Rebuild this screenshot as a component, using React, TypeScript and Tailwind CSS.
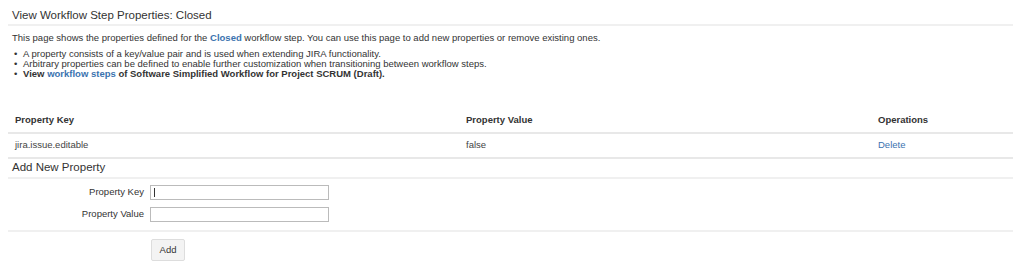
import React from "react";

export default function App() {
  const font = { fontFamily: '"Liberation Sans", Arial, sans-serif' };
  const bullets: React.ReactNode[] = [
    <>A property consists of a key/value pair and is used when extending JIRA functionality.</>,
    <>Arbitrary properties can be defined to enable further customization when transitioning between workflow steps.</>,
    <span className="font-bold">
      View <span className="text-[#3b73af]">workflow steps</span> of Software Simplified Workflow for Project SCRUM (Draft).
    </span>,
  ];
  return (
    <div className="w-[1024px] h-[267px] bg-white text-[#333] overflow-hidden" style={font}>
      <div className="pl-[8px] pr-[11px] pt-[8px]">
        <h2 className="text-[11.5px] leading-[14px] pl-[4px] pb-[2px] border-b-2 border-[#f0f0f0] font-normal">
          View Workflow Step Properties: Closed
        </h2>
        <p className="text-[9.5px] leading-[12px] pl-[4px] mt-[6px]">
          This page shows the properties defined for the{" "}
          <span className="text-[#3b73af] font-bold">Closed</span> workflow step. You can use this page to add new properties or remove existing ones.
        </p>
        <ul className="text-[9.5px] leading-[10px] pl-[6px] mt-[5px]">
          {bullets.map((b, i) => (
            <li key={i} className="flex">
              <span className="w-[9px] shrink-0">•</span>
              <span>{b}</span>
            </li>
          ))}
        </ul>
        <div className="mt-[30px] text-[9.5px]">
          <div className="grid grid-cols-[458px_412px_1fr] h-[25px] items-center border-b-2 border-[#e8e8e8] font-bold">
            <div className="pl-[7px]">Property Key</div>
            <div>Property Value</div>
            <div>Operations</div>
          </div>
          <div className="grid grid-cols-[458px_412px_1fr] h-[25px] items-center border-b-2 border-[#e8e8e8]">
            <div className="pl-[7px] text-[#444]">jira.issue.editable</div>
            <div className="text-[#444]">false</div>
            <div className="text-[#3b73af]">Delete</div>
          </div>
        </div>
        <div className="text-[11.5px] leading-[14px] pl-[4px] pb-[3px] border-b-2 border-[#f0f0f0] mt-[1px]">
          Add New Property
        </div>
        <div className="text-[9.5px] pt-[6px]">
          <div className="flex items-center h-[15px]">
            <div className="w-[142px] text-right pr-[6px]">Property Key</div>
            <div className="w-[179px] h-[15px] border border-[#bbb] flex items-center pl-[3px]">
              <div className="w-px h-[9px] bg-[#333]" />
            </div>
          </div>
          <div className="flex items-center h-[15px] mt-[7px]">
            <div className="w-[142px] text-right pr-[6px]">Property Value</div>
            <div className="w-[179px] h-[15px] border border-[#bbb]" />
          </div>
        </div>
        <div className="border-b-2 border-[#f0f0f0] mt-[8px]" />
        <div className="pl-[143px] pt-[7px]">
          <div className="w-[34px] h-[22px] border border-[#ddd] bg-[#f3f3f3] rounded-[2px] flex items-center justify-center text-[9.5px]">
            Add
          </div>
        </div>
      </div>
    </div>
  );
}
